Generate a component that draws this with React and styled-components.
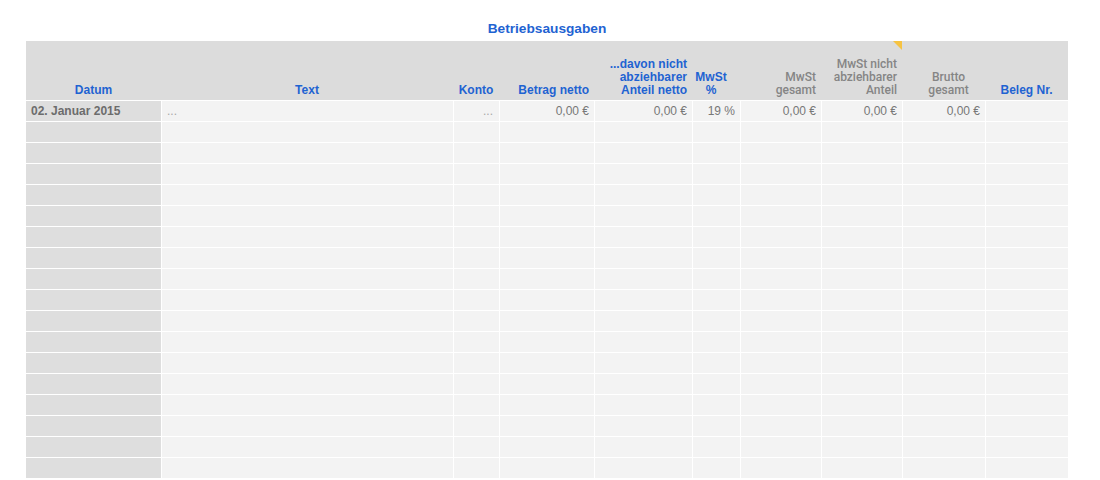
import React from 'react'
import styled, { createGlobalStyle } from 'styled-components';

const GlobalStyle = createGlobalStyle`
  body {
    margin: 0;
    background: #ffffff;
    font-family: "Liberation Sans", Arial, sans-serif;
  }
`;

const Page = styled.div`
  width: 1042px;
  padding-left: 26px;
`;

const Title = styled.h1`
  margin: 0 0 4px;
  padding-top: 21px;
  font-size: 13.7px;
  line-height: 16px;
  font-weight: 700;
  text-align: center;
  color: #1f63d2;
`;

const Grid = styled.div`
  display: grid;
  grid-template-columns: 135px 292px 46px 95px 98px 48px 81px 81px 83px 83px;
`;

const HeadCell = styled.div`
  position: relative;
  box-sizing: border-box;
  height: 59px;
  display: flex;
  flex-direction: column;
  justify-content: flex-end;
  padding: ${({ $pad }) => $pad || '0 5px'};
  padding-bottom: 3px;
  background: #dcdcdc;
  font-family: ${({ $blue }) => ($blue ? '"Liberation Sans", Arial' : 'Roboto, "Liberation Sans"')}, sans-serif;
  font-size: 12px;
  line-height: 13px;
  font-weight: ${({ $blue }) => ($blue ? 700 : 500)};
  text-align: ${({ $align }) => $align};
  color: ${({ $blue }) => ($blue ? '#1f63d2' : '#858585')};
`;

const Marker = styled.span`
  position: absolute;
  top: 0;
  right: 0;
  width: 0;
  height: 0;
  border-top: 9px solid #f6c343;
  border-left: 9px solid transparent;
`;

const Cell = styled.div`
  box-sizing: border-box;
  height: 21px;
  border-top: 1px solid #ffffff;
  border-left: ${({ $first }) => ($first ? 'none' : '1px solid #ffffff')};
  padding: 0 5px;
  background: ${({ $first }) => ($first ? '#dedede' : '#f3f3f3')};
  font-size: 12px;
  line-height: 20px;
  text-align: ${({ $align }) => $align};
  font-weight: ${({ $first }) => ($first ? 700 : 400)};
  color: ${({ $first }) => ($first ? '#6c6c6c' : '#777777')};
  white-space: nowrap;
  overflow: hidden;
`;

const Dots = styled.span`
  color: #a8a8a8;
  padding-right: ${({ $right }) => ($right ? '1px' : '0')};
`;

const columns = [
  { label: ['Datum'], blue: true, align: 'center' },
  { label: ['Text'], blue: true, align: 'center' },
  { label: ['Konto'], blue: true, align: 'center', pad: '0 2px' },
  { label: ['Betrag netto'], blue: true, align: 'right' },
  { label: ['...davon nicht', 'abziehbarer', 'Anteil netto'], blue: true, align: 'right' },
  { label: ['MwSt', '%'], blue: true, align: 'center', pad: '0 12px 0 2px' },
  { label: ['MwSt', 'gesamt'], align: 'right' },
  { label: ['MwSt nicht', 'abziehbarer', 'Anteil'], align: 'right', marker: true },
  { label: ['Brutto', 'gesamt'], align: 'center', pad: '0 14px 0 24px' },
  { label: ['Beleg Nr.'], blue: true, align: 'center' },
];

const firstRow = [
  { value: '02. Januar 2015', align: 'left' },
  { value: <Dots>...</Dots>, align: 'left' },
  { value: <Dots $right>...</Dots>, align: 'right' },
  { value: '0,00 €', align: 'right' },
  { value: '0,00 €', align: 'right' },
  { value: '19 %', align: 'right' },
  { value: '0,00 €', align: 'right' },
  { value: '0,00 €', align: 'right' },
  { value: '0,00 €', align: 'right' },
  { value: '', align: 'left' },
];

const emptyRows = Array.from({ length: 17 });

const App = () => {
  return (
    <Page>
      <GlobalStyle />
      <Title>Betriebsausgaben</Title>
      <Grid>
        {columns.map((col, i) => (
          <HeadCell key={i} $blue={col.blue} $align={col.align} $pad={col.pad}>
            {col.label.map((line) => (
              <span key={line}>{line}</span>
            ))}
            {col.marker && <Marker />}
          </HeadCell>
        ))}
        {firstRow.map((c, i) => (
          <Cell key={'f' + i} $first={i === 0} $align={c.align}>
            {c.value}
          </Cell>
        ))}
        {emptyRows.map((_, r) =>
          columns.map((col, i) => (
            <Cell key={r + '-' + i} $first={i === 0} $align="left" />
          ))
        )}
      </Grid>
    </Page>
  )
}

export default App
